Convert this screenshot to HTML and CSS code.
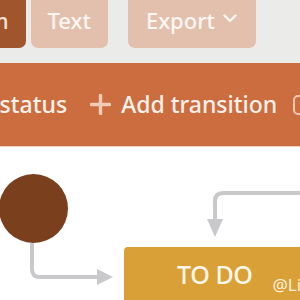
FILE: index.html
```html
<!DOCTYPE html>
<html lang="en">
<head>
<meta charset="utf-8">
<title>Workflow editor</title>
<link rel="stylesheet" href="styles.css">
</head>
<body>
<header class="topbar">
  <nav class="tabs">
    <button class="tab tab-active">Diagram</button>
    <button class="tab tab-text">Text</button>
    <button class="tab tab-export">Export
      <svg class="chev" width="14" height="9" viewBox="0 0 14 9"><path d="M1.5 1.5 L7 7 L12.5 1.5" fill="none" stroke="currentColor" stroke-width="2.4" stroke-linecap="round" stroke-linejoin="round"/></svg>
    </button>
  </nav>
</header>
<div class="toolbar">
  <div class="tools">
    <span class="tool">
      <svg class="plus" width="21" height="21" viewBox="0 0 21 21"><path d="M10.5 1.5 V19.5 M1.5 10.5 H19.5" stroke="currentColor" stroke-width="3.4" stroke-linecap="round"/></svg>
      Add status
    </span>
    <span class="tool">
      <svg class="plus" width="21" height="21" viewBox="0 0 21 21"><path d="M10.5 1.5 V19.5 M1.5 10.5 H19.5" stroke="currentColor" stroke-width="3.4" stroke-linecap="round"/></svg>
      Add transition
    </span>
    <span class="tool">
      <svg class="box-icon" width="20" height="20" viewBox="0 0 20 20"><rect x="1" y="1" width="18" height="18" rx="4" fill="none" stroke="currentColor" stroke-width="2"/></svg>
      Show labels
    </span>
  </div>
</div>
<main class="canvas">
  <svg class="edges" width="300" height="153" viewBox="0 0 300 153">
    <path d="M32 96 V122 Q32 130 40 130 H99" fill="none" stroke="#c9c9cb" stroke-width="4"/>
    <polygon points="113,130 97,122 97,138" fill="#c9c9cb"/>
    <path d="M310 46 H223 Q215 46 215 54 V73" fill="none" stroke="#c9c9cb" stroke-width="4"/>
    <polygon points="215,90 207,72 223,72" fill="#c9c9cb"/>
  </svg>
  <div class="start"></div>
  <div class="node">
    <span class="node-title">TO DO</span>
    <span class="node-handle">@Link</span>
  </div>
</main>
</body>
</html>
```
FILE: styles.css
```css
html, body {
  margin: 0;
  padding: 0;
}
body {
  width: 300px;
  height: 300px;
  overflow: hidden;
  background: #ffffff;
  font-family: "Noto Sans", "Open Sans", sans-serif;
}
.topbar {
  background: #ebebe9;
  height: 63px;
  overflow: hidden;
}
.tabs {
  display: flex;
  margin-top: -8px;
  margin-left: -99px;
  white-space: nowrap;
}
.tab {
  height: 56px;
  border: 0;
  border-radius: 7px;
  padding: 0 17px;
  font-family: inherit;
  font-size: 22px;
  font-weight: 500;
  display: flex;
  align-items: center;
  flex: none;
}
.tab-active {
  background: #a1552d;
  color: #f7e3d6;
  margin-right: 5px;
}
.tab-text {
  background: #e3c0ae;
  color: #fdf6f1;
  margin-right: 20px;
}
.tab-export {
  background: #e3c0ae;
  color: #fdf6f1;
  padding-left: 18px;
  padding-right: 19px;
  gap: 8px;
}
.chev {
  margin-top: -3px;
}
.toolbar {
  background: #cc6d40;
  height: 83px;
  border-bottom: 1px solid #f2cdb7;
  display: flex;
  align-items: center;
  overflow: hidden;
}
.tools {
  display: flex;
  align-items: center;
  gap: 23px;
  margin-left: -81px;
  white-space: nowrap;
  flex: none;
}
.tool {
  display: flex;
  align-items: center;
  gap: 10px;
  font-size: 23px;
  font-weight: 500;
  color: #fcf1ea;
  line-height: 1;
}
.plus {
  color: #f0cbb6;
}
.box-icon {
  color: #efc7b1;
  margin-left: -7px;
}
.canvas {
  position: relative;
  height: 153px;
  background: #ffffff;
}
.edges {
  position: absolute;
  left: 0;
  top: 0;
}
.start {
  position: absolute;
  left: -1px;
  top: 27px;
  width: 69px;
  height: 69px;
  border-radius: 50%;
  background: #7a3f1d;
}
.node {
  position: absolute;
  left: 124px;
  top: 100px;
  width: 220px;
  height: 100px;
  background: #d9a037;
  border-radius: 4px;
  display: flex;
  align-items: flex-start;
  gap: 20px;
  padding: 15px 0 0 53px;
  box-sizing: border-box;
  white-space: nowrap;
}
.node-title {
  font-size: 25px;
  line-height: 25px;
  font-weight: 500;
  letter-spacing: -0.4px;
  color: #fdf6ea;
}
.node-handle {
  font-size: 17px;
  line-height: 17px;
  color: #fcf0dc;
  margin-top: 14px;
}
```
